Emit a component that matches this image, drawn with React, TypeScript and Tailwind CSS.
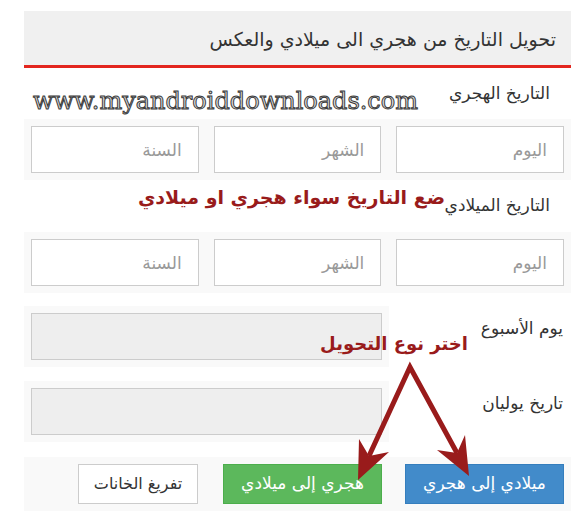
import React from "react";

const DateInputs = () => (
  <div dir="rtl" className="grid grid-cols-3 gap-[15px] bg-[#f9f9f9] p-[7px]">
    {["اليوم", "الشهر", "السنة"].map((p) => (
      <input
        key={p}
        placeholder={p}
        className="h-[47px] w-full border border-[#ccc] bg-white pr-[16px] text-right text-[17px] text-[#555] outline-none placeholder:text-[#999]"
      />
    ))}
  </div>
);

const ResultRow = ({ label }: { label: string }) => (
  <div dir="rtl" className="flex">
    <div className="w-[182px] pr-[8px] pt-[10px] text-[17px] text-[#333]">{label}</div>
    <div className="w-[365px] bg-[#f9f9f9] p-[7px]">
      <input readOnly className="h-[47px] w-full border border-[#ccc] bg-[#eee] outline-none" />
    </div>
  </div>
);

export default function App() {
  return (
    <div className="relative h-[518px] w-[588px] overflow-hidden bg-white font-['DejaVu_Sans',sans-serif]">
      <div className="ml-[24px] w-[547px] pt-[11px]">
        <div
          dir="rtl"
          className="flex h-[57px] items-center border-b-[3px] border-[#e3261f] bg-[#f0f0f0] pr-[15px] pt-[2px] text-[19px] text-[#333]"
        >
          تحويل التاريخ من هجري الى ميلادي والعكس
        </div>

        <div dir="rtl" className="flex h-[51px] items-center pr-[21px] text-[17px] text-[#333]">
          التاريخ الهجري
        </div>
        <DateInputs />

        <div dir="rtl" className="flex h-[52px] items-center pr-[21px] text-[17px] text-[#333]">
          التاريخ الميلادي
        </div>
        <DateInputs />

        <div className="mt-[13px] flex flex-col gap-[14px]">
          <ResultRow label="يوم الأسبوع" />
          <ResultRow label="تاريخ يوليان" />
        </div>

        <div dir="rtl" className="mt-[15px] flex gap-[23px] bg-[#f9f9f9] p-[7px]">
          <button className="h-[40px] w-[159px] border border-[#357ebd] bg-[#428bca] text-[17px] text-white">
            ميلادي إلى هجري
          </button>
          <button className="h-[40px] w-[159px] border border-[#4cae4c] bg-[#5cb85c] text-[17px] text-white">
            هجري إلى ميلادي
          </button>
          <button className="mr-[2px] h-[40px] w-[120px] border border-[#ccc] bg-white text-[16px] text-[#333]">
            تفريغ الخانات
          </button>
        </div>
      </div>

      {/* watermark and annotations laid over the form */}
      <div className="absolute left-[33px] top-[89px] font-['DejaVu_Serif',serif] text-[24px] leading-none text-[#ddd] [-webkit-text-stroke:1px_#3a3a3a]">
        www.myandroiddownloads.com
      </div>
      <div
        dir="rtl"
        className="absolute right-[143px] top-[186px] text-[19px] font-bold leading-[22px] text-[#991b1b]"
      >
        ضع التاريخ سواء هجري او ميلادي
      </div>
      <div
        dir="rtl"
        className="absolute right-[120px] top-[333px] text-[18px] font-bold leading-[22px] text-[#991b1b]"
      >
        اختر نوع التحويل
      </div>
      <svg className="pointer-events-none absolute left-0 top-0" width="588" height="518" viewBox="0 0 588 518">
        <polyline
          points="369,456 410,367 457,453"
          fill="none"
          stroke="#991b1b"
          strokeWidth="5"
          strokeLinejoin="miter"
        />
        <path d="M358 480 L359 439 L369 456 L389 452 Z" fill="#991b1b" />
        <path d="M469 476 L437 450 L457 453 L465 435 Z" fill="#991b1b" />
      </svg>
    </div>
  );
}
